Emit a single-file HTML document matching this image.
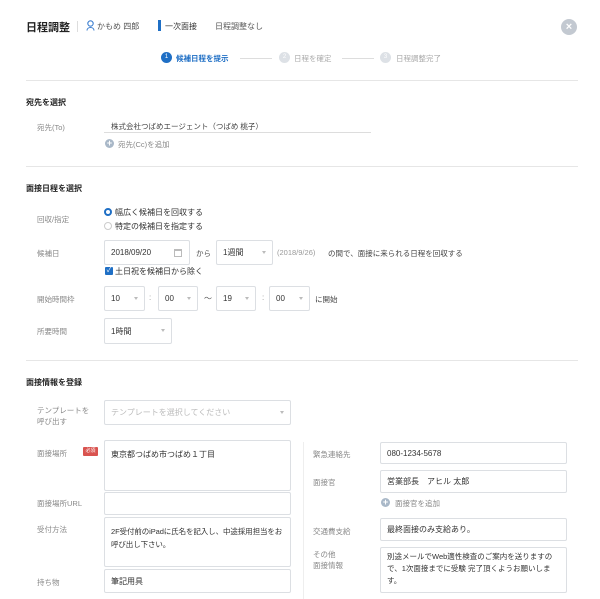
<!DOCTYPE html>
<html><head><meta charset="utf-8"><style>
*{margin:0;padding:0;box-sizing:border-box}
body{width:600px;height:599px;background:#fff;position:relative;overflow:hidden;font-family:"Liberation Sans","Noto Sans CJK JP",sans-serif;color:#333}
.a{position:absolute;white-space:nowrap}
.lb{font-size:7.5px;color:#888}
.h{font-size:8px;font-weight:bold;color:#222}
.bx{position:absolute;border:1px solid #dcdfe3;border-radius:2px;background:#fff;font-size:8px;color:#333;padding:0 6px;display:flex;align-items:center}
.ta{align-items:flex-start;padding-top:7px;line-height:13px;white-space:normal}
.ar{position:absolute;right:6px;top:50%;margin-top:-2px;width:0;height:0;border-left:2px solid transparent;border-right:2px solid transparent;border-top:3px solid #bbb}
.hr{position:absolute;left:26px;width:552px;height:1px;background:#e6e6e6}
.pl{position:absolute;width:9px;height:9px;border-radius:50%;background:#a9b8c8;color:#fff;font-size:9px;line-height:9px;text-align:center;font-weight:bold}
</style></head><body>
<div class="a" style="left:26px;top:19px;font-size:11px;font-weight:bold;color:#222">日程調整</div>
<div class="a" style="left:77px;top:21px;width:1px;height:11px;background:#ddd"></div>
<svg class="a" style="left:86px;top:20px" width="9" height="11" viewBox="0 0 9 11"><circle cx="4.5" cy="3.5" r="2.7" fill="none" stroke="#3d7fd0" stroke-width="1.1"/><path d="M1 10.5 C1 6.5 8 6.5 8 10.5" fill="none" stroke="#3d7fd0" stroke-width="1.1"/></svg>
<div class="a" style="left:97px;top:21px;font-size:8px;color:#555">かもめ 四郎</div>
<div class="a" style="left:158px;top:20px;width:3px;height:11px;background:#1f6fc5"></div>
<div class="a" style="left:165px;top:21px;font-size:8px;color:#333">一次面接</div>
<div class="a" style="left:215px;top:21px;font-size:8px;color:#555">日程調整なし</div>
<div class="a" style="left:561px;top:19px;width:16px;height:16px;border-radius:50%;background:#c3c9d1;color:#fff;font-size:11px;line-height:16px;text-align:center;font-weight:bold">×</div>

<div class="a" style="left:161px;top:52px;width:11px;height:11px;border-radius:50%;background:#1f6fc5;color:#fff;font-size:6px;line-height:11px;text-align:center">1</div>
<div class="a" style="left:176px;top:53px;font-size:7.5px;color:#1f6fc5;font-weight:bold">候補日程を提示</div>
<div class="a" style="left:240px;top:58px;width:32px;height:1px;background:#ddd"></div>
<div class="a" style="left:279px;top:52px;width:11px;height:11px;border-radius:50%;background:#dde1e6;color:#fff;font-size:6px;line-height:11px;text-align:center">2</div>
<div class="a" style="left:294px;top:53px;font-size:7.5px;color:#aaa">日程を確定</div>
<div class="a" style="left:342px;top:58px;width:32px;height:1px;background:#ddd"></div>
<div class="a" style="left:380px;top:52px;width:11px;height:11px;border-radius:50%;background:#dde1e6;color:#fff;font-size:6px;line-height:11px;text-align:center">3</div>
<div class="a" style="left:396px;top:53px;font-size:7.5px;color:#aaa">日程調整完了</div>
<div class="hr" style="top:80px"></div>

<div class="a h" style="left:26px;top:97px">宛先を選択</div>
<div class="a lb" style="left:37px;top:122px">宛先(To)</div>
<div class="a" style="left:111px;top:121px;font-size:7.5px;color:#444">株式会社つばめエージェント（つばめ 桃子）</div>
<div class="a" style="left:104px;top:132px;width:267px;height:1px;background:#ddd"></div>
<div class="pl" style="left:105px;top:139px">+</div>
<div class="a lb" style="left:118px;top:139px">宛先(Cc)を追加</div>
<div class="hr" style="top:166px"></div>

<div class="a h" style="left:26px;top:183px">面接日程を選択</div>
<div class="a lb" style="left:37px;top:214px">回収/指定</div>
<div class="a" style="left:104px;top:208px;width:8px;height:8px;border-radius:50%;border:2.5px solid #1f6fc5"></div>
<div class="a" style="left:115px;top:207px;font-size:8px;color:#333">幅広く候補日を回収する</div>
<div class="a" style="left:104px;top:222px;width:8px;height:8px;border-radius:50%;border:1px solid #ccc"></div>
<div class="a" style="left:115px;top:221px;font-size:8px;color:#333">特定の候補日を指定する</div>

<div class="a lb" style="left:37px;top:248px">候補日</div>
<div class="bx" style="left:104px;top:240px;width:86px;height:25px">2018/09/20<span style="position:absolute;right:7px;top:8px;width:8px;height:8px;border:1px solid #bbb;border-top-width:2px"></span></div>
<div class="a" style="left:196px;top:248px;font-size:7.5px;color:#555">から</div>
<div class="bx" style="left:216px;top:240px;width:57px;height:25px">1週間<span class="ar"></span></div>
<div class="a" style="left:277px;top:248px;font-size:7.5px;color:#999">(2018/9/26)</div>
<div class="a" style="left:328px;top:248px;font-size:7.5px;color:#444">の間で、面接に来られる日程を回収する</div>
<div class="a" style="left:105px;top:267px;width:8px;height:8px;border-radius:1px;background:#1f6fc5;color:#fff;font-size:7px;line-height:8px;text-align:center">✓</div>
<div class="a" style="left:115px;top:266px;font-size:8px;color:#333">土日祝を候補日から除く</div>

<div class="a lb" style="left:37px;top:294px">開始時間枠</div>
<div class="bx" style="left:104px;top:286px;width:41px;height:25px">10<span class="ar"></span></div>
<div class="a" style="left:149px;top:293px;font-size:8px;color:#999">:</div>
<div class="bx" style="left:158px;top:286px;width:40px;height:25px">00<span class="ar"></span></div>
<div class="a" style="left:204px;top:293px;font-size:8px;color:#555">〜</div>
<div class="bx" style="left:216px;top:286px;width:40px;height:25px">19<span class="ar"></span></div>
<div class="a" style="left:262px;top:293px;font-size:8px;color:#999">:</div>
<div class="bx" style="left:269px;top:286px;width:41px;height:25px">00<span class="ar"></span></div>
<div class="a" style="left:315px;top:294px;font-size:7.5px;color:#444">に開始</div>

<div class="a lb" style="left:37px;top:326px">所要時間</div>
<div class="bx" style="left:104px;top:318px;width:68px;height:26px">1時間<span class="ar"></span></div>
<div class="hr" style="top:360px"></div>

<div class="a h" style="left:26px;top:377px">面接情報を登録</div>
<div class="a lb" style="left:37px;top:405px;line-height:11px">テンプレートを<br>呼び出す</div>
<div class="bx" style="left:104px;top:400px;width:187px;height:25px;color:#bbb">テンプレートを選択してください<span class="ar"></span></div>

<div class="a lb" style="left:37px;top:448px">面接場所</div>
<div class="a" style="left:83px;top:447px;width:15px;height:9px;background:#d9534f;color:#fff;font-size:5px;line-height:9px;text-align:center;border-radius:1px">必須</div>
<div class="bx ta" style="left:104px;top:440px;width:187px;height:51px">東京都つばめ市つばめ１丁目</div>
<div class="a lb" style="left:37px;top:498px">面接場所URL</div>
<div class="bx" style="left:104px;top:492px;width:187px;height:23px"></div>
<div class="a lb" style="left:37px;top:524px">受付方法</div>
<div class="bx ta" style="left:104px;top:517px;width:187px;height:50px;font-size:7.5px;letter-spacing:-0.1px">2F受付前のiPadに氏名を記入し、中途採用担当をお呼び出し下さい。</div>
<div class="a lb" style="left:37px;top:577px">持ち物</div>
<div class="bx" style="left:104px;top:569px;width:187px;height:24px">筆記用具</div>

<div class="a" style="left:303px;top:442px;width:1px;height:157px;background:#eee"></div>

<div class="a lb" style="left:313px;top:449px">緊急連絡先</div>
<div class="bx" style="left:380px;top:442px;width:187px;height:22px">080-1234-5678</div>
<div class="a lb" style="left:313px;top:477px">面接官</div>
<div class="bx" style="left:380px;top:470px;width:187px;height:23px">営業部長　アヒル 太郎</div>
<div class="pl" style="left:381px;top:498px">+</div>
<div class="a lb" style="left:395px;top:498px">面接官を追加</div>
<div class="a lb" style="left:313px;top:526px">交通費支給</div>
<div class="bx" style="left:380px;top:518px;width:187px;height:23px">最終面接のみ支給あり。</div>
<div class="a lb" style="left:313px;top:549px;line-height:11px">その他<br>面接情報</div>
<div class="bx ta" style="left:380px;top:547px;width:187px;height:46px;padding-top:3px;font-size:7.5px;line-height:12px">別途メールでWeb適性検査のご案内を送りますので、1次面接までに受験 完了頂くようお願いします。</div>
</body></html>
